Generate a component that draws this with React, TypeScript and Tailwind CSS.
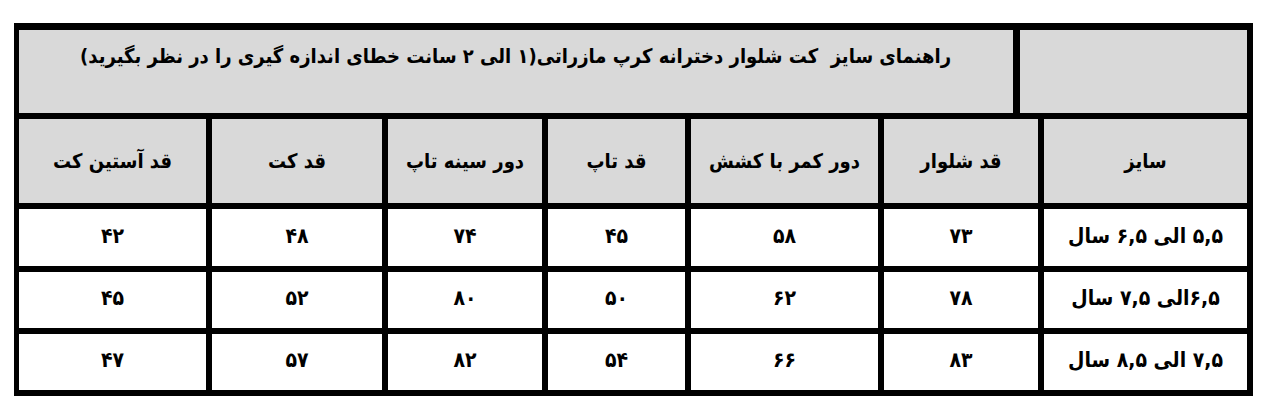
const font = { fontFamily: '"DejaVu Sans Condensed", "DejaVu Sans", sans-serif' };

const headers = ['سایز', 'قد شلوار', 'دور کمر با کشش', 'قد تاپ', 'دور سینه تاپ', 'قد کت', 'قد آستین کت'];

const rows: string[][] = [
  ['۵,۵ الی ۶,۵ سال', '۷۳', '۵۸', '۴۵', '۷۴', '۴۸', '۴۲'],
  ['۶,۵الی ۷,۵ سال', '۷۸', '۶۲', '۵۰', '۸۰', '۵۲', '۴۵'],
  ['۷,۵ الی ۸,۵ سال', '۸۳', '۶۶', '۵۴', '۸۲', '۵۷', '۴۷'],
];

export default function App() {
  return (
    <div className="min-h-[420px] w-[1280px] bg-white pt-[23px] pl-[14px]" style={font}>
      <div dir="rtl" className="flex w-[1239px] flex-col gap-[6px] bg-black pt-[7px] pr-[6px] pb-[6px] pl-[5px] font-bold text-black">
        {/* title row: empty cell on the right, note on the left */}
        <div className="flex h-[83px] gap-[7px]">
          <div className="w-[227px] bg-[#d9d9d9]" />
          <div className="flex-1 bg-[#d9d9d9] pt-[11px] pr-[62px] text-[20px] leading-[30px] whitespace-pre">
            راهنمای سایز  کت شلوار دخترانه کرپ مازراتی(۱ الی ۲ سانت خطای اندازه گیری را در نظر بگیرید)
          </div>
        </div>

        <div className="grid grid-cols-[203px_154px_187px_137px_154px_170px_187px] grid-rows-[84px_57px_56px_56px] gap-[6px]">
          {headers.map((h) => (
            <div key={h} className="flex items-center justify-center bg-[#d9d9d9] text-[20px]">
              {h}
            </div>
          ))}
          {rows.map((r, i) =>
            r.map((c, j) => (
              <div key={`${i}-${j}`} className="flex items-center justify-center bg-white pb-[2px] text-[21px]">
                {c}
              </div>
            )),
          )}
        </div>
      </div>
    </div>
  );
}
